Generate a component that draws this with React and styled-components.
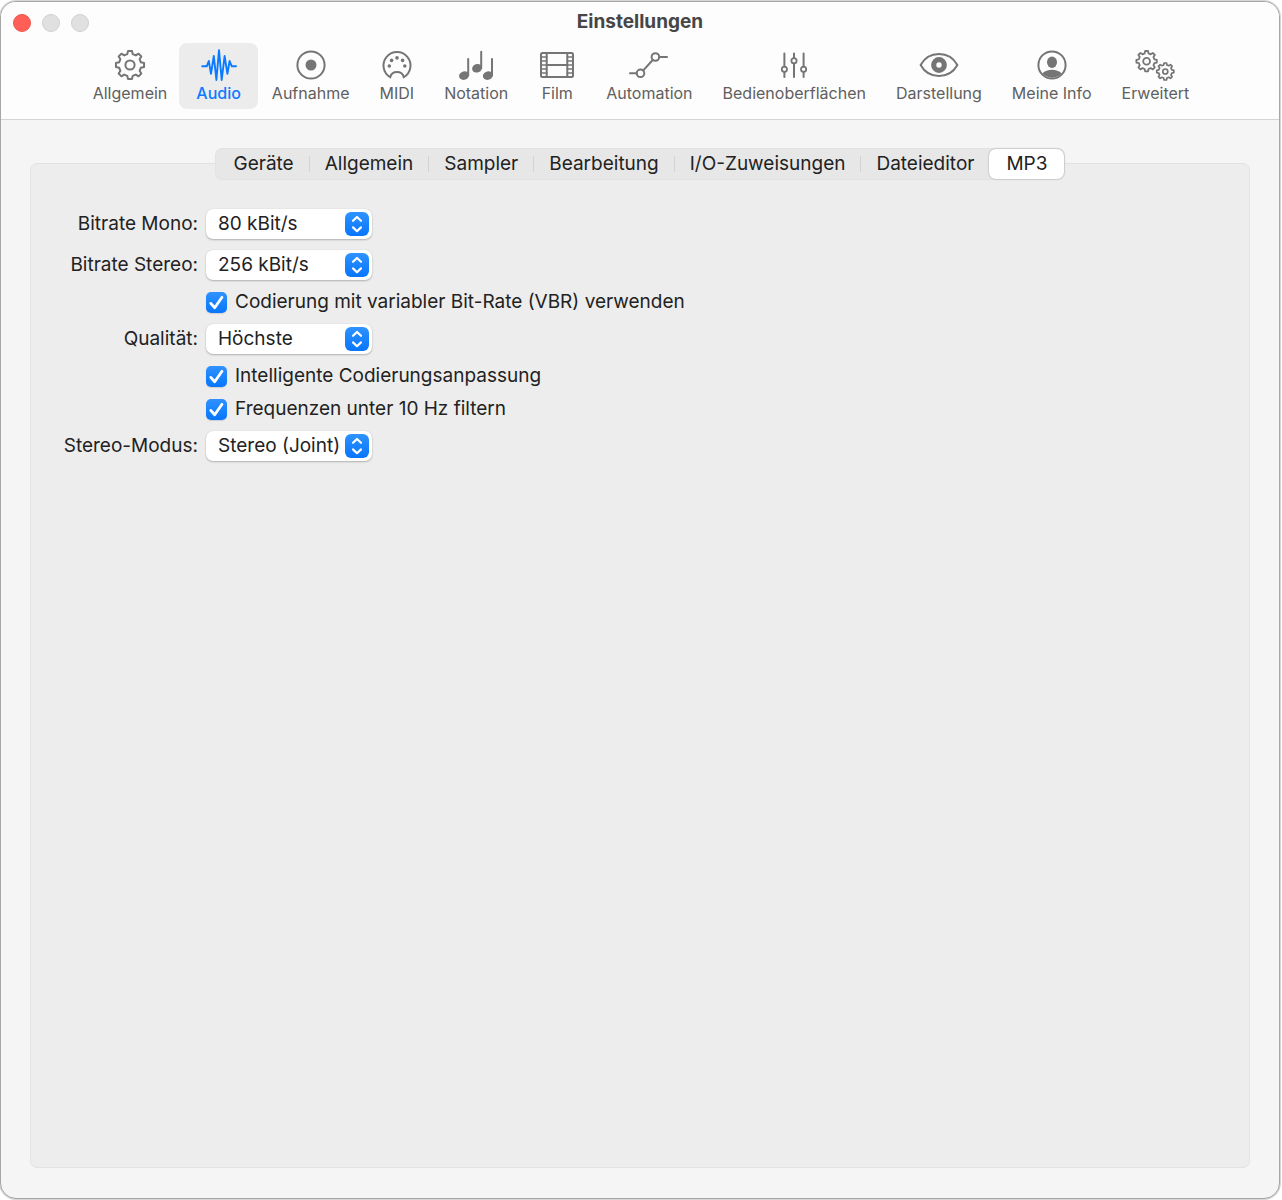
import React, { useState } from 'react';
import styled, { createGlobalStyle, ThemeProvider } from 'styled-components';

const theme = {
    font: '"Inter", "Liberation Sans", sans-serif',
    color: {
        text: '#222222',
        muted: '#606060',
        icon: '#757575',
        accent: '#0a7aff',
        header: '#fdfdfd',
        page: '#f5f5f5',
        panel: '#ededed',
        line: '#e2e2e2'
    }
};

const GlobalStyle = createGlobalStyle`
    *, *::before, *::after {
        box-sizing: border-box;
    }

    body {
        margin: 0;
        background: #ffffff;
        font-family: ${theme.font};
        color: ${theme.color.text};
    }

    button, select, input {
        font: inherit;
        color: inherit;
        margin: 0;
    }
`;

const Window = styled.div`
    display: flex;
    flex-direction: column;
    min-height: calc(100vh - 2px);
    margin: 1px 2px 1px 0;
    border: 1px solid #a6a6a6;
    border-radius: 16px;
    box-shadow: 0 0 0 1px #d6d6d6;
    background-color: ${props => props.theme.color.page};
    overflow: hidden;
`;

const Header = styled.header`
    padding-bottom: 10px;
    border-bottom: 1px solid #d4d4d4;
    background-color: ${props => props.theme.color.header};
`;

const TitleBar = styled.div`
    display: grid;
    grid-template-columns: 1fr auto 1fr;
    align-items: center;
    height: 41px;
    padding: 0 12px;
`;

const WindowButtons = styled.div`
    display: flex;
    gap: 11px;
`;

const WindowButton = styled.button`
    width: 18px;
    height: 18px;
    padding: 0;
    border: 1px solid ${props => (props.$close ? '#f0554c' : '#d0d0d0')};
    border-radius: 50%;
    background-color: ${props => (props.$close ? '#ff5f57' : '#e0e0e0')};
`;

const Title = styled.h1`
    margin: 0;
    padding-bottom: 1px;
    font-size: 19px;
    line-height: 24px;
    font-weight: 700;
    color: #464646;
`;

const Toolbar = styled.nav`
    display: flex;
    justify-content: center;
    padding-left: 2px;
`;

const ToolbarButton = styled.button`
    display: flex;
    flex-direction: column;
    align-items: center;
    height: 66px;
    margin: ${props => (props.$active ? '0 -1px 0 -3px' : '0')};
    padding: 6px ${props => (props.$active ? '17px' : '15px')} 3px;
    border: 0;
    border-radius: 8px;
    background-color: ${props => (props.$active ? '#ececec' : 'transparent')};
    color: ${props => (props.$active ? props.theme.color.accent : props.theme.color.icon)};
`;

const ToolbarLabel = styled.span`
    font-size: 16px;
    line-height: 24px;
    white-space: nowrap;
    font-weight: ${props => (props.$active ? 500 : 400)};
    color: ${props => (props.$active ? 'inherit' : props.theme.color.muted)};
`;

const IconSvg = styled.svg`
    display: block;
    width: 40px;
    height: 32px;
    margin: 0 ${props => (props.$wide ? '-1px' : '-4px')};
    fill: none;
    stroke: currentColor;
    stroke-width: 2;
    stroke-linecap: round;
    stroke-linejoin: round;
`;

const Main = styled.main`
    flex: 1;
    display: flex;
    flex-direction: column;
    padding: 28px 29px 30px;
`;

const Tabs = styled.div`
    position: relative;
    display: flex;
    align-self: center;
    height: 32px;
    margin-bottom: -17px;
    padding: 1px 1px 1px 4px;
    border-radius: 8px;
    background-color: #e7e7e7;
    box-shadow: inset 0 0 0 1px #e2e2e2;
`;

const Tab = styled.button`
    display: flex;
    align-items: center;
    padding: 0 ${props => (props.$active ? '17px' : '15px')} 1px;
    border: 0;
    border-radius: 7px;
    font-size: 19px;
    background-color: ${props => (props.$active ? '#ffffff' : 'transparent')};
    box-shadow: ${props => (props.$active ? '0 0 2px #00000055' : 'none')};
`;

const TabDivider = styled.span`
    width: 1px;
    margin: 7px 0;
    background-color: #d3d3d3;
`;

const Panel = styled.section`
    flex: 1;
    padding: 45px 32px;
    border: 1px solid ${props => props.theme.color.line};
    border-radius: 7px;
    background-color: ${props => props.theme.color.panel};
`;

const Form = styled.form`
    display: grid;
    grid-template-columns: 135px auto;
    justify-content: start;
    justify-items: start;
    align-items: center;
    gap: 11px 8px;
    font-size: 19px;
    line-height: 22px;
`;

const FieldLabel = styled.label`
    justify-self: end;
    white-space: nowrap;
`;

const SelectBox = styled.div`
    position: relative;
    width: 166px;
    height: 30px;
`;

const Select = styled.select`
    width: 100%;
    height: 100%;
    padding: 0 28px 1px 12px;
    appearance: none;
    border: 0;
    border-radius: 7px;
    background-color: #ffffff;
    box-shadow: 0 1px 2px #00000040, 0 0 1px #00000026;
`;

const SelectArrows = styled.svg`
    position: absolute;
    top: 3px;
    right: 3px;
    width: 24px;
    height: 24px;
    border-radius: 6px;
    background: linear-gradient(#2f92ff, #0676fb);
    fill: none;
    stroke: #ffffff;
    stroke-width: 2.2;
    stroke-linecap: round;
    stroke-linejoin: round;
    pointer-events: none;
`;

const CheckLabel = styled.label`
    grid-column: 2;
    display: flex;
    align-items: center;
    gap: 8px;
    white-space: nowrap;
`;

const CheckBox = styled.span`
    display: grid;
    width: 21px;
    height: 21px;

    > * {
        grid-area: 1 / 1;
    }
`;

const CheckInput = styled.input`
    width: 21px;
    height: 21px;
    appearance: none;
    border-radius: 5px;
    background: #ffffff;
    box-shadow: 0 0 1px #00000066;

    &:checked {
        background: linear-gradient(#2f92ff, #0676fb);
        box-shadow: 0 1px 1px #00000022;
    }

    &:not(:checked) + svg {
        visibility: hidden;
    }
`;

const CheckMark = styled.svg`
    width: 21px;
    height: 21px;
    fill: none;
    stroke: #ffffff;
    stroke-width: 2.8;
    stroke-linecap: round;
    stroke-linejoin: round;
    pointer-events: none;
`;

// Outline of an eight-toothed cog, one tooth pointing straight up
const gearPath = (cx, cy, outer, root) => {
    const points = [];
    for (let i = 0; i < 8; i++) {
        [[-14, root], [-8, outer], [8, outer], [14, root]].forEach(([deg, r]) => {
            const a = ((i * 45 + deg - 90) * Math.PI) / 180;
            points.push(`${(cx + r * Math.cos(a)).toFixed(2)} ${(cy + r * Math.sin(a)).toFixed(2)}`);
        });
    }
    return `M${points.join('L')}Z`;
};

const icons = {
    gear: (
        <>
            <path d={gearPath(20, 16, 14.2, 11.2)} />
            <circle cx="20" cy="16" r="4.6" />
        </>
    ),
    wave: (
        <path strokeWidth="1.9" d="M3.2 17.3H7.7L9.8 12L12 24.8L14.8 7L17.4 31L20 1.2L22.7 31L25.6 7L28.4 24.8L30.6 12L32.8 17.3H37" />
    ),
    record: (
        <>
            <circle cx="20" cy="16" r="13.6" />
            <circle cx="20" cy="16" r="5.5" fill="currentColor" stroke="none" />
        </>
    ),
    midi: (
        <>
            <path strokeLinejoin="miter" d="M13.2 28.2A13.5 13.5 0 1 1 26.8 28.2C25 21.4 15 21.4 13.2 28.2Z" />
            <g fill="currentColor" stroke="none">
                <circle cx="12.3" cy="17" r="1.8" />
                <circle cx="14.6" cy="11.4" r="1.8" />
                <circle cx="20" cy="8.9" r="1.8" />
                <circle cx="25.6" cy="11.4" r="1.8" />
                <circle cx="27.8" cy="17" r="1.8" />
            </g>
        </>
    ),
    notes: (
        <>
            <path d="M12.2 10V26.5M25.2 2.8V19.3M36 10V26.5" />
            <g fill="currentColor" stroke="none">
                <ellipse cx="8" cy="26.6" rx="5" ry="4.2" transform="rotate(-20 8 26.6)" />
                <ellipse cx="21" cy="19.3" rx="5" ry="4.2" transform="rotate(-20 21 19.3)" />
                <ellipse cx="31.8" cy="26.6" rx="5" ry="4.2" transform="rotate(-20 31.8 26.6)" />
            </g>
        </>
    ),
    film: (
        <>
            <rect x="4" y="4" width="32" height="24" rx="1.5" />
            <path d="M9.7 4V28M30.3 4V28M9.7 16H30.3" />
            <path strokeWidth="1.5" d="M4 8H9.7M4 12H9.7M4 16H9.7M4 20H9.7M4 24H9.7M30.3 8H36M30.3 12H36M30.3 16H36M30.3 20H36M30.3 24H36" />
        </>
    ),
    automation: (
        <>
            <path d="M1 24.3H7.7M14.3 21.4L23.7 11M30.2 8H38" />
            <circle cx="11.5" cy="24.3" r="3.8" />
            <circle cx="26.4" cy="8" r="3.8" />
        </>
    ),
    sliders: (
        <>
            <path d="M10.4 4.5V17.5M10.4 23V28M20 4.5V9M20 14.5V28M29.6 4.5V17.5M29.6 23V28" />
            <circle cx="10.4" cy="20.2" r="2.6" strokeWidth="1.8" />
            <circle cx="20" cy="11.8" r="2.6" strokeWidth="1.8" />
            <circle cx="29.6" cy="20.2" r="2.6" strokeWidth="1.8" />
        </>
    ),
    eye: (
        <>
            <path d="M1.6 16C5.5 9 12 5 20 5S34.5 9 38.4 16C34.5 23 28 27 20 27S5.5 23 1.6 16Z" />
            <circle cx="20" cy="16" r="5.3" strokeWidth="5.2" />
        </>
    ),
    person: (
        <>
            <circle cx="20" cy="16" r="13.6" />
            <ellipse cx="20" cy="13.2" rx="5" ry="5.7" fill="currentColor" stroke="none" />
            <path d="M10.3 24.6C15 19.6 25 19.6 29.7 24.6A13.6 13.6 0 0 1 10.3 24.6Z" fill="currentColor" stroke="none" />
        </>
    ),
    gears: (
        <>
            <path strokeWidth="1.8" d={gearPath(11.6, 12.2, 10.3, 8)} />
            <circle cx="11.6" cy="12.2" r="3.4" strokeWidth="1.8" />
            <path strokeWidth="1.7" d={gearPath(30.3, 22.5, 8.6, 6.7)} />
            <circle cx="30.3" cy="22.5" r="2.5" strokeWidth="1.7" />
        </>
    )
};

const sections = [
    { name: 'Allgemein', icon: 'gear' },
    { name: 'Audio', icon: 'wave' },
    { name: 'Aufnahme', icon: 'record' },
    { name: 'MIDI', icon: 'midi' },
    { name: 'Notation', icon: 'notes' },
    { name: 'Film', icon: 'film', wide: true },
    { name: 'Automation', icon: 'automation' },
    { name: 'Bedienoberflächen', icon: 'sliders' },
    { name: 'Darstellung', icon: 'eye' },
    { name: 'Meine Info', icon: 'person' },
    { name: 'Erweitert', icon: 'gears' }
];

const tabs = ['Geräte', 'Allgemein', 'Sampler', 'Bearbeitung', 'I/O-Zuweisungen', 'Dateieditor', 'MP3'];

const SelectField = ({ id, label, options }) => (
    <>
        <FieldLabel htmlFor={id}>{label}</FieldLabel>
        <SelectBox>
            <Select id={id}>
                {options.map(option => <option key={option}>{option}</option>)}
            </Select>
            <SelectArrows viewBox="0 0 24 24" aria-hidden="true">
                <path d="M8 8.8L12 5L16 8.8M8 15.4L12 19.2L16 15.4" />
            </SelectArrows>
        </SelectBox>
    </>
);

const CheckField = ({ id, label }) => (
    <CheckLabel htmlFor={id}>
        <CheckBox>
            <CheckInput id={id} type="checkbox" defaultChecked />
            <CheckMark viewBox="0 0 21 21" aria-hidden="true">
                <path d="M4.8 11.4L8.7 15.8L16 5.3" />
            </CheckMark>
        </CheckBox>
        {label}
    </CheckLabel>
);

const App = () => {
    const [section, setSection] = useState('Audio');
    const [tab, setTab] = useState('MP3');

    return (
        <ThemeProvider theme={theme}>
            <GlobalStyle />
            <Window>
                <Header>
                    <TitleBar>
                        <WindowButtons>
                            <WindowButton $close aria-label="Schließen" />
                            <WindowButton aria-label="Minimieren" />
                            <WindowButton aria-label="Zoomen" />
                        </WindowButtons>
                        <Title>Einstellungen</Title>
                    </TitleBar>
                    <Toolbar>
                        {sections.map(({ name, icon, wide }) => (
                            <ToolbarButton key={name} $active={name === section} onClick={() => setSection(name)}>
                                <IconSvg $wide={wide} viewBox="0 0 40 32" aria-hidden="true">{icons[icon]}</IconSvg>
                                <ToolbarLabel $active={name === section}>{name}</ToolbarLabel>
                            </ToolbarButton>
                        ))}
                    </Toolbar>
                </Header>
                <Main>
                    <Tabs role="tablist">
                        {tabs.map((name, i) => (
                            <React.Fragment key={name}>
                                {i > 0 && name !== tab && tabs[i - 1] !== tab && <TabDivider />}
                                <Tab role="tab" aria-selected={name === tab} $active={name === tab} onClick={() => setTab(name)}>
                                    {name}
                                </Tab>
                            </React.Fragment>
                        ))}
                    </Tabs>
                    <Panel>
                        <Form>
                            <SelectField id="mono" label="Bitrate Mono:" options={['80 kBit/s', '96 kBit/s', '128 kBit/s']} />
                            <SelectField id="stereo" label="Bitrate Stereo:" options={['256 kBit/s', '160 kBit/s', '320 kBit/s']} />
                            <CheckField id="vbr" label="Codierung mit variabler Bit-Rate (VBR) verwenden" />
                            <SelectField id="quality" label="Qualität:" options={['Höchste', 'Hoch', 'Mittel']} />
                            <CheckField id="smart" label="Intelligente Codierungsanpassung" />
                            <CheckField id="filter" label="Frequenzen unter 10 Hz filtern" />
                            <SelectField id="mode" label="Stereo-Modus:" options={['Stereo (Joint)', 'Stereo (Normal)']} />
                        </Form>
                    </Panel>
                </Main>
            </Window>
        </ThemeProvider>
    );
};

export default App;
